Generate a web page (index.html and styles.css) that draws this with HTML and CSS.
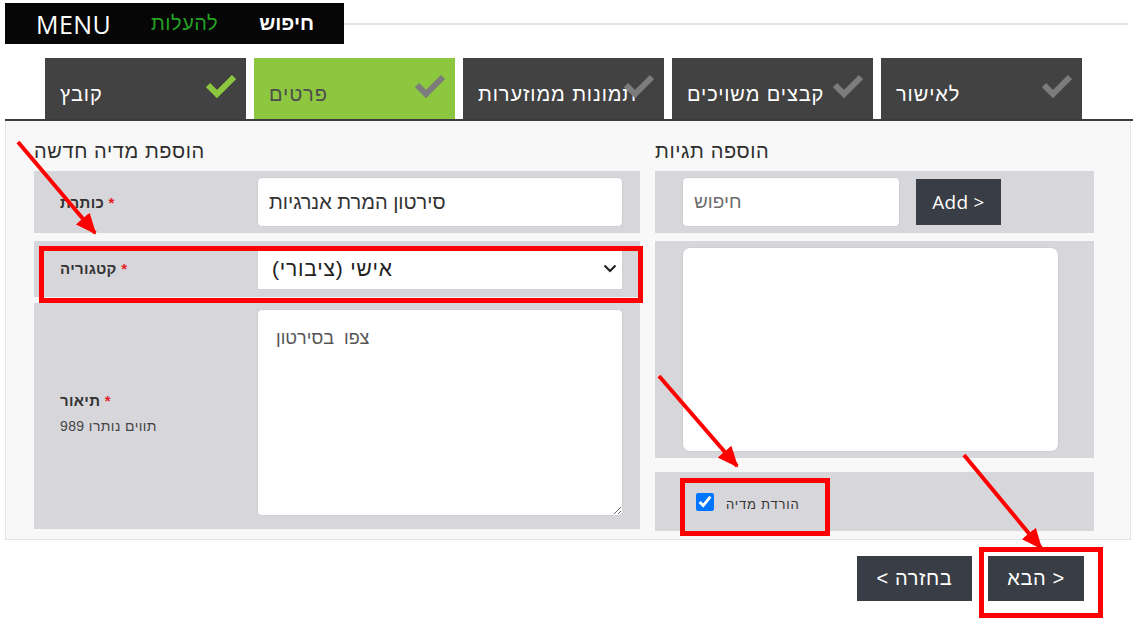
FILE: index.html
```html
<!DOCTYPE html>
<html lang="he">
<head>
<meta charset="utf-8">
<title>הוספת מדיה חדשה</title>
<link rel="stylesheet" href="styles.css">
</head>
<body>
<div class="page">
  <header class="topbar">
    <nav class="menu">
      <span class="menu-title">MENU</span>
      <span class="menu-upload">להעלות</span>
      <span class="menu-search">חיפוש</span>
    </nav>
    <div class="topline"></div>
  </header>

  <div class="tabs">
    <div class="tab tab-done">
      <span class="tab-label">קובץ</span>
      <svg class="check" viewBox="0 0 30 24"><polyline points="2,11 11,20 28,3"/></svg>
    </div>
    <div class="tab tab-active">
      <span class="tab-label">פרטים</span>
      <svg class="check" viewBox="0 0 30 24"><polyline points="2,11 11,20 28,3"/></svg>
    </div>
    <div class="tab">
      <span class="tab-label">תמונות ממוזערות</span>
      <svg class="check" viewBox="0 0 30 24"><polyline points="2,11 11,20 28,3"/></svg>
    </div>
    <div class="tab">
      <span class="tab-label">קבצים משויכים</span>
      <svg class="check" viewBox="0 0 30 24"><polyline points="2,11 11,20 28,3"/></svg>
    </div>
    <div class="tab">
      <span class="tab-label">לאישור</span>
      <svg class="check" viewBox="0 0 30 24"><polyline points="2,11 11,20 28,3"/></svg>
    </div>
  </div>

  <main class="panel">
    <section class="col-left">
      <h2 class="col-title">הוספת מדיה חדשה</h2>
      <div class="row row-title">
        <div class="label"><span class="label-text">כותרת <span class="req">*</span></span></div>
        <input class="field" type="text" value="סירטון המרת אנרגיות">
      </div>
      <div class="row row-category">
        <div class="label"><span class="label-text">קטגוריה <span class="req">*</span></span></div>
        <div class="select-wrap">
          <select class="select">
            <option>אישי (ציבורי)</option>
          </select>
          <svg class="chevron" viewBox="0 0 14 9"><polyline points="1.5,1.5 7,7 12.5,1.5"/></svg>
        </div>
      </div>
      <div class="row row-desc">
        <div class="label">
          <span class="label-text">תיאור <span class="req">*</span></span>
          <span class="label-note">תווים נותרו 989</span>
        </div>
        <textarea class="area">צפו  בסירטון</textarea>
      </div>
    </section>

    <section class="col-right">
      <h2 class="col-title">הוספה תגיות</h2>
      <div class="tagbox tag-search">
        <input class="field tag-input" type="text" placeholder="חיפוש">
        <button class="btn btn-add" type="button">Add &gt;</button>
      </div>
      <div class="tagbox tag-list">
        <div class="tag-area"></div>
      </div>
      <div class="tagbox tag-download">
        <input class="checkbox" type="checkbox" checked id="dl">
        <label class="check-label" for="dl">הורדת מדיה</label>
      </div>
    </section>
  </main>

  <div class="actions">
    <button class="btn btn-nav btn-back" type="button">&lt; בחזרה</button>
    <button class="btn btn-nav btn-next" type="button">הבא &gt;</button>
  </div>
</div>

<svg class="annotations" viewBox="0 0 1133 622">
  <defs>
    <marker id="head" markerUnits="userSpaceOnUse" markerWidth="22" markerHeight="18" refX="19" refY="9" orient="auto">
      <path d="M0,0 L21,9 L0,18 Z" fill="#f00"/>
    </marker>
  </defs>
  <rect x="41.5" y="248.5" width="599" height="52"/>
  <rect x="682.5" y="480.5" width="145" height="53"/>
  <rect x="981.5" y="549.5" width="119" height="66"/>
  <line x1="18" y1="142" x2="95" y2="233" marker-end="url(#head)"/>
  <line x1="659" y1="376" x2="737" y2="466" marker-end="url(#head)"/>
  <line x1="964" y1="455" x2="1041" y2="548" marker-end="url(#head)"/>
</svg>
</body>
</html>
```

FILE: styles.css
```css
* { box-sizing: border-box; }

html, body {
  margin: 0;
  padding: 0;
}

body {
  width: 1133px;
  height: 622px;
  overflow: hidden;
  position: relative;
  background: #ffffff;
  font-family: "Liberation Sans", "DejaVu Sans", sans-serif;
  color: #333;
}

/* ---------- top bar ---------- */
.topbar {
  display: flex;
  align-items: center;
  padding: 3px 5px 0 5px;
}

.menu {
  width: 339px;
  height: 41px;
  background: #060606;
  display: flex;
  align-items: center;
  padding-left: 31px;
}

.menu-title {
  font-family: "Open Sans", "Liberation Sans", sans-serif;
  font-size: 25px;
  color: #fff;
  letter-spacing: 0.4px;
}

.menu-upload {
  margin-left: 40px;
  font-size: 20px;
  color: #23a123;
  letter-spacing: 0.5px;
}

.menu-search {
  margin-left: 41px;
  font-size: 20px;
  font-weight: bold;
  color: #fff;
}

.topline {
  flex: 1;
  height: 2px;
  background: #e3e3e3;
  margin-top: 1px;
}

/* ---------- tabs ---------- */
.tabs {
  display: flex;
  gap: 8px;
  margin: 14px 0 0 5px;
  padding-left: 40px;
  border-bottom: 2px solid #3c3c3c;
}

.tab {
  position: relative;
  width: 201px;
  height: 61px;
  background: #424242;
  color: #fff;
  padding: 25px 0 0 15px;
  font-size: 20px;
  letter-spacing: 0.9px;
  white-space: nowrap;
}

.tab-active {
  background: #8dc63f;
  color: #4d4d4d;
}

.check {
  position: absolute;
  right: 10px;
  top: 16px;
  width: 30px;
  height: 24px;
}

.check polyline {
  fill: none;
  stroke: #7c7c7c;
  stroke-width: 6;
}

.tab-done .check polyline {
  stroke: #8dc63f;
}

/* ---------- panel ---------- */
.panel {
  display: flex;
  gap: 15px;
  width: 1126px;
  height: 419px;
  margin-left: 5px;
  padding-left: 28px;
  background: #f8f8f8;
  border: 1px solid #e4e4e4;
  border-top: none;
}

.col-left { width: 606px; }
.col-right { width: 439px; }

.col-title {
  margin: 0;
  height: 50px;
  padding-top: 19px;
  font-size: 20px;
  line-height: 22px;
  letter-spacing: 0.6px;
  font-weight: normal;
  color: #2e2e2e;
}

.row {
  display: flex;
  align-items: center;
  background: #d7d7db;
  padding: 6px 17px 6px 0;
}

.row-title { margin-bottom: 8px; }
.row-category { margin-bottom: 6px; padding-bottom: 7px; }
.row-desc { padding-bottom: 13px; }

.label {
  width: 223px;
  padding-left: 26px;
  display: flex;
  flex-direction: column;
}

.label-text {
  font-size: 15px;
  font-weight: bold;
  color: #333;
  letter-spacing: 0.3px;
}

.req {
  color: #e4202a;
}

.label-note {
  margin-top: 9px;
  font-size: 14px;
  letter-spacing: 0.4px;
  color: #444;
}

.field {
  width: 366px;
  height: 50px;
  border: 1px solid #cfcfd3;
  border-radius: 5px;
  background: #fff;
  padding: 0 11px;
  font-family: "Liberation Sans", "DejaVu Sans", sans-serif;
  font-size: 20px;
  color: #333;
  outline: none;
}

.select-wrap {
  position: relative;
  width: 366px;
  height: 43px;
}

.select {
  appearance: none;
  -webkit-appearance: none;
  width: 100%;
  height: 100%;
  border: 1px solid #d2d2d6;
  border-radius: 0;
  background: #fff;
  padding: 0 14px;
  font-family: "Liberation Sans", "DejaVu Sans", sans-serif;
  font-size: 21px;
  letter-spacing: 0.8px;
  color: #222;
  outline: none;
}

.chevron {
  position: absolute;
  right: 6px;
  top: 17px;
  width: 14px;
  height: 9px;
  pointer-events: none;
}

.chevron polyline {
  fill: none;
  stroke: #222;
  stroke-width: 2.2;
}

.area {
  width: 366px;
  height: 207px;
  border: 1px solid #cfcfd3;
  border-radius: 5px;
  background: #fff;
  padding: 17px 18px;
  font-family: "Liberation Sans", "DejaVu Sans", sans-serif;
  font-size: 18px;
  line-height: 22px;
  color: #555;
  resize: both;
  outline: none;
}

/* ---------- tags column ---------- */
.tagbox {
  background: #d7d7db;
  display: flex;
  align-items: center;
  padding-left: 27px;
}

.tag-search {
  height: 62px;
  gap: 16px;
}

.tag-input {
  width: 218px;
  font-size: 19px;
}

.tag-input::placeholder {
  color: #6d6d6d;
}

.btn {
  border: none;
  background: #393d45;
  color: #fff;
  font-family: "Liberation Sans", "DejaVu Sans", sans-serif;
  padding: 0;
  cursor: pointer;
}

.btn-add {
  width: 85px;
  height: 46px;
  font-family: "Open Sans", "Liberation Sans", sans-serif;
  font-size: 19px;
  letter-spacing: 0.3px;
}

.tag-list {
  margin-top: 8px;
  height: 217px;
  align-items: flex-start;
  padding-top: 6px;
}

.tag-area {
  width: 377px;
  height: 205px;
  background: #fff;
  border: 1px solid #cfcfd3;
  border-radius: 8px;
}

.tag-download {
  margin-top: 14px;
  height: 59px;
  padding-left: 41px;
}

.checkbox {
  width: 18px;
  height: 18px;
  margin: 0;
  accent-color: #0075ff;
}

.check-label {
  margin-left: 12px;
  margin-top: 6px;
  font-size: 13px;
  letter-spacing: 0.8px;
  color: #333;
}

/* ---------- bottom actions ---------- */
.actions {
  display: flex;
  justify-content: flex-end;
  gap: 16px;
  margin-top: 16px;
  padding-right: 49px;
}

.btn-nav {
  height: 45px;
  font-size: 20px;
  letter-spacing: 0.6px;
}

.btn-back { width: 115px; }
.btn-next { width: 96px; }

/* ---------- annotation overlay ---------- */
.annotations {
  position: absolute;
  left: 0;
  top: 0;
  width: 1133px;
  height: 622px;
  pointer-events: none;
}

.annotations rect {
  fill: none;
  stroke: #ff0000;
  stroke-width: 5;
}

.annotations line {
  stroke: #ff0000;
  stroke-width: 4;
}
```
